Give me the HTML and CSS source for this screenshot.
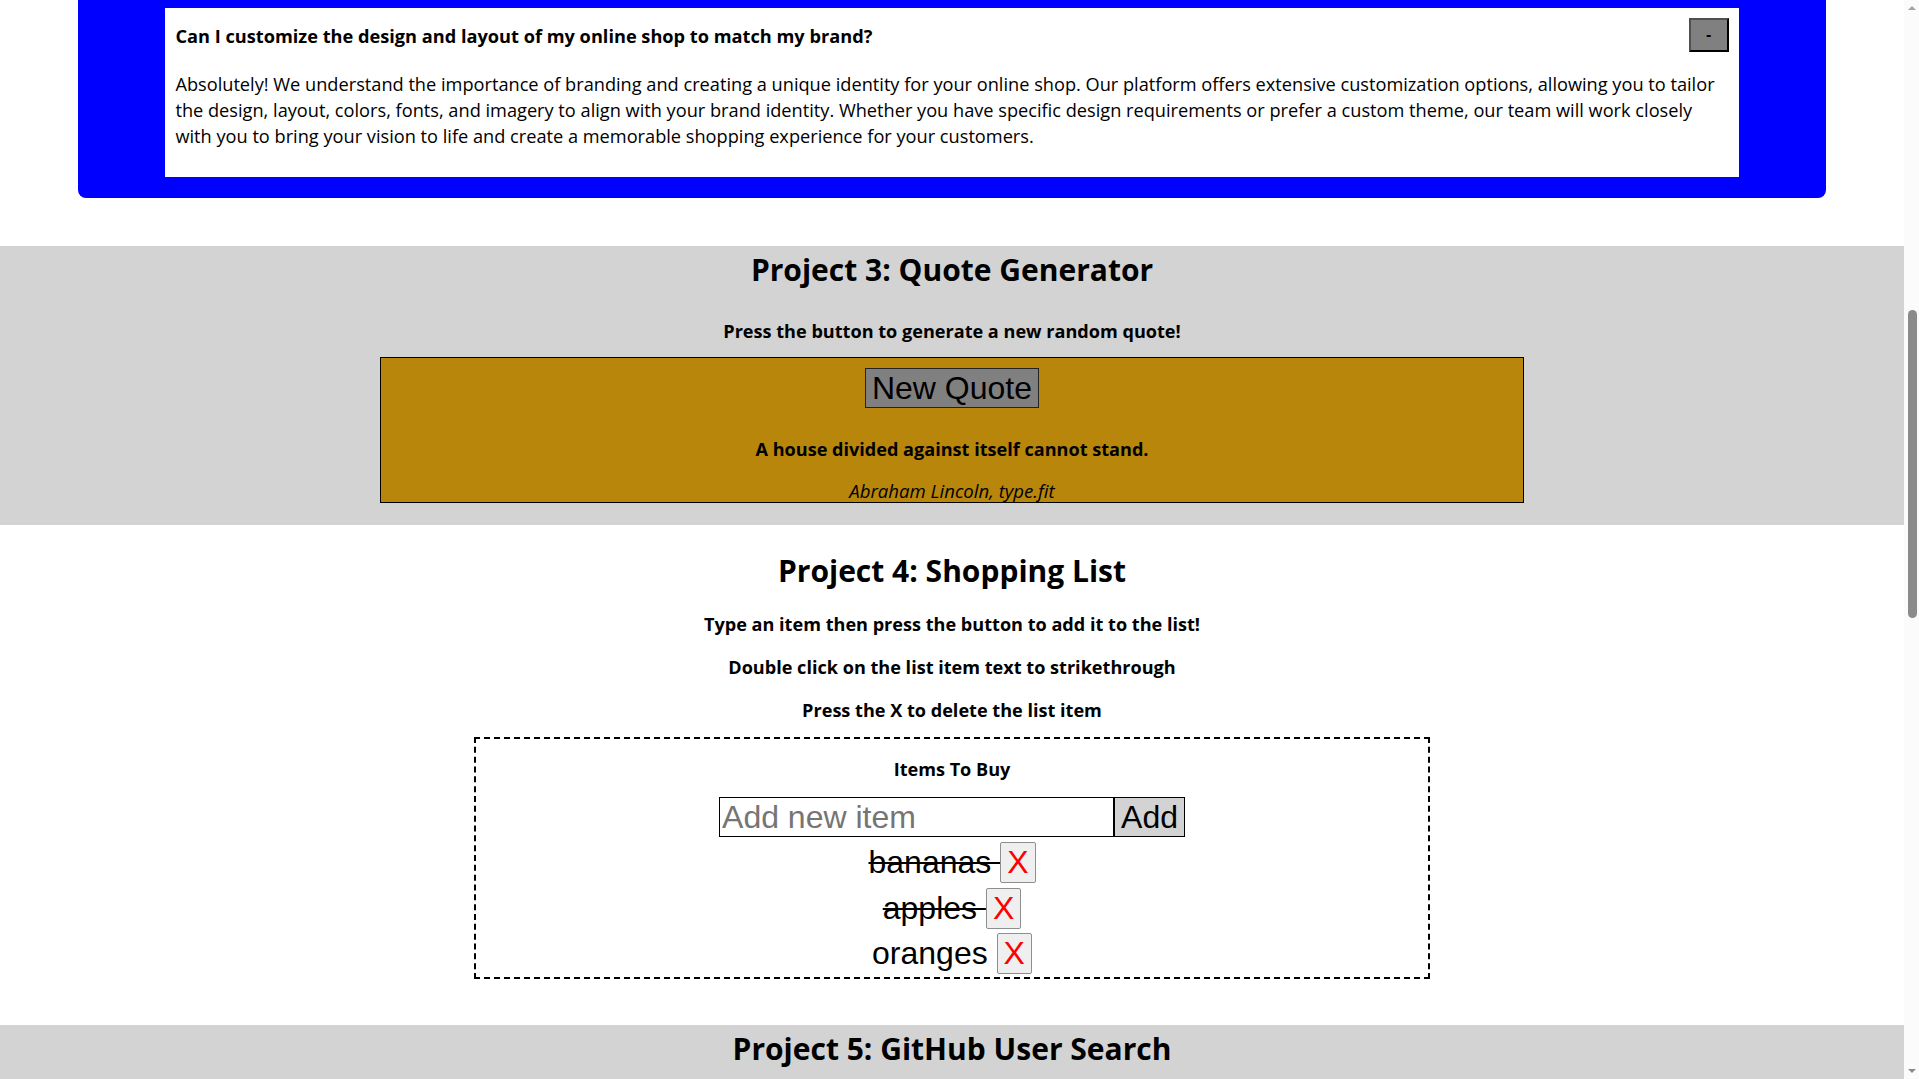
FILE: index.html
```html
<!DOCTYPE html>
<html lang="en">
<head>
<meta charset="utf-8">
<title>Mini JavaScript Projects</title>
<link rel="stylesheet" href="styles.css">
</head>
<body>
<section class="project project--faq">
  <div class="faq">
    <article class="faq-item">
      <div class="faq-head">
        <p class="faq-q">Can I customize the design and layout of my online shop to match my brand?</p>
        <button class="faq-toggle">-</button>
      </div>
      <p class="faq-a">Absolutely! We understand the importance of branding and creating a unique identity for your online shop. Our platform offers extensive customization options, allowing you to tailor the design, layout, colors, fonts, and imagery to align with your brand identity. Whether you have specific design requirements or prefer a custom theme, our team will work closely with you to bring your vision to life and create a memorable shopping experience for your customers.</p>
    </article>
  </div>
</section>

<section class="project project--gray">
  <h2>Project 3: Quote Generator</h2>
  <p class="lead lead--quote">Press the button to generate a new random quote!</p>
  <div class="quote-box">
    <button class="big-btn">New Quote</button>
    <p class="quote-text">A house divided against itself cannot stand.</p>
    <p class="quote-author">Abraham Lincoln, type.fit</p>
  </div>
</section>

<section class="project project--list">
  <h2>Project 4: Shopping List</h2>
  <p class="lead lead--first">Type an item then press the button to add it to the list!</p>
  <p class="lead">Double click on the list item text to strikethrough</p>
  <p class="lead">Press the X to delete the list item</p>
  <div class="list-box">
    <h3 class="list-title">Items To Buy</h3>
    <div class="add-row">
      <input class="add-input" type="text" placeholder="Add new item">
      <button class="add-btn">Add</button>
    </div>
    <ul class="items">
      <li class="item item--done">bananas <button class="del-btn">X</button></li>
      <li class="item item--done">apples <button class="del-btn">X</button></li>
      <li class="item">oranges <button class="del-btn">X</button></li>
    </ul>
  </div>
</section>

<section class="project project--gray project--github">
  <h2>Project 5: GitHub User Search</h2>
</section>

<div class="fake-scrollbar" aria-hidden="true">
  <span class="sb-arrow sb-arrow--up"></span>
  <span class="sb-thumb"></span>
  <span class="sb-arrow sb-arrow--down"></span>
</div>
</body>
</html>
```

FILE: styles.css
```css
html {
  background: #fff;
}

body {
  margin: 0 15px 0 0;
  font-family: "Open Sans", "Noto Sans", sans-serif;
  font-size: 18.2px;
  color: #000;
}

/* decorative page scrollbar, drawn over the right edge */
.fake-scrollbar {
  position: fixed;
  top: 0;
  right: 0;
  width: 15px;
  height: 100%;
  background: #fbfbfb;
}

.sb-thumb {
  position: absolute;
  top: 310px;
  left: 4px;
  width: 9px;
  height: 308px;
  background: #8b8b8b;
  border-radius: 5px;
}

.sb-arrow {
  position: absolute;
  left: 4px;
  width: 0;
  height: 0;
  border-left: 4px solid transparent;
  border-right: 4px solid transparent;
}

.sb-arrow--up {
  top: 6px;
  border-bottom: 4px solid #a3a3a3;
}

.sb-arrow--down {
  bottom: 6px;
  border-top: 4px solid #8b8b8b;
}

.project {
  text-align: center;
  padding: 5px 0 22px;
}

.project--gray {
  background: #d3d3d3;
}

.project h2 {
  margin: 0;
  font-size: 30px;
  line-height: 38px;
  font-weight: 700;
}

.lead {
  margin: 17px 0 0;
  font-size: 18.1px;
  line-height: 26px;
  font-weight: 700;
}

.lead--first {
  margin-top: 21px;
}

.lead--quote {
  margin: 29px 0 13px;
}

/* FAQ */
.project--faq {
  padding: 0 0 48px;
}

.faq {
  margin: 0 78px;
  padding: 8px 0 21px;
  background: #0000ff;
  border-radius: 0 0 8px 8px;
  text-align: left;
}

.faq-item {
  box-sizing: border-box;
  width: 90%;
  margin: 0 auto;
  padding: 10px;
  background: #fff;
}

.faq-head {
  display: flex;
  justify-content: space-between;
  align-items: center;
  gap: 20px;
}

.faq-q {
  margin: 0;
  padding-top: 2px;
  font-size: 18.2px;
  font-weight: 700;
}

.faq-toggle {
  flex: none;
  width: 40px;
  height: 34px;
  padding: 0;
  background: #808080;
  border: 2px solid;
  border-color: #505050 #000 #000 #505050;
  font: 700 16px "Liberation Sans", Arial, sans-serif;
  color: #000;
}

.faq-a {
  margin: 20px 6px 18px 0;
  line-height: 25.75px;
}

/* Quote generator */
.quote-box {
  width: 60%;
  margin: 0 auto;
  padding: 10px 0 0;
  background: #b8860b;
  border: 1px solid #000;
}

.big-btn {
  display: block;
  margin: 0 auto;
  padding: 1px 6px;
  font: 32px/36px "Liberation Sans", Arial, sans-serif;
  color: #000;
  background: #808080;
  border: 1px solid #222;
}

.quote-text {
  margin: 28px 0 0;
  font-size: 18.1px;
  line-height: 26px;
  font-weight: 700;
}

.quote-author {
  margin: 18px 0 0;
  font-size: 18.6px;
  line-height: 22px;
  font-style: italic;
}

/* Shopping list */
.project--list {
  padding: 27px 0 46px;
}

.list-box {
  width: 50%;
  margin: 14px auto 0;
  border: 2px dashed #000;
}

.list-title {
  margin: 17px 0 0;
  font-size: 18.1px;
  line-height: 26px;
  font-weight: 700;
}

.add-row {
  display: flex;
  justify-content: center;
  margin-top: 15px;
}

.add-input {
  box-sizing: border-box;
  width: 395px;
  height: 40px;
  margin: 0;
  padding: 1px 2px;
  border: 1px solid #000;
  font: 32px "Liberation Sans", Arial, sans-serif;
  color: #000;
  background: #fff;
}

.add-input::placeholder {
  color: #757575;
}

.add-btn {
  box-sizing: border-box;
  height: 40px;
  margin: 0;
  padding: 1px 6px;
  border: 1px solid #000;
  background: #d3d3d3;
  font: 32px/36px "Liberation Sans", Arial, sans-serif;
  color: #000;
}

.items {
  margin: 3px 0 0;
  padding: 0;
  list-style: none;
}

.item {
  font: 32px/45.5px "Liberation Sans", Arial, sans-serif;
}

.item--done {
  text-decoration: line-through;
  text-decoration-thickness: 2px;
}

.del-btn {
  padding: 1px 6px;
  font: 32px/37px "Liberation Sans", Arial, sans-serif;
  color: #ff0000;
  background: #efefef;
  border: 1px solid #8f8f8f;
  border-radius: 2px;
}

.project--github {
  padding-bottom: 40px;
}
```
